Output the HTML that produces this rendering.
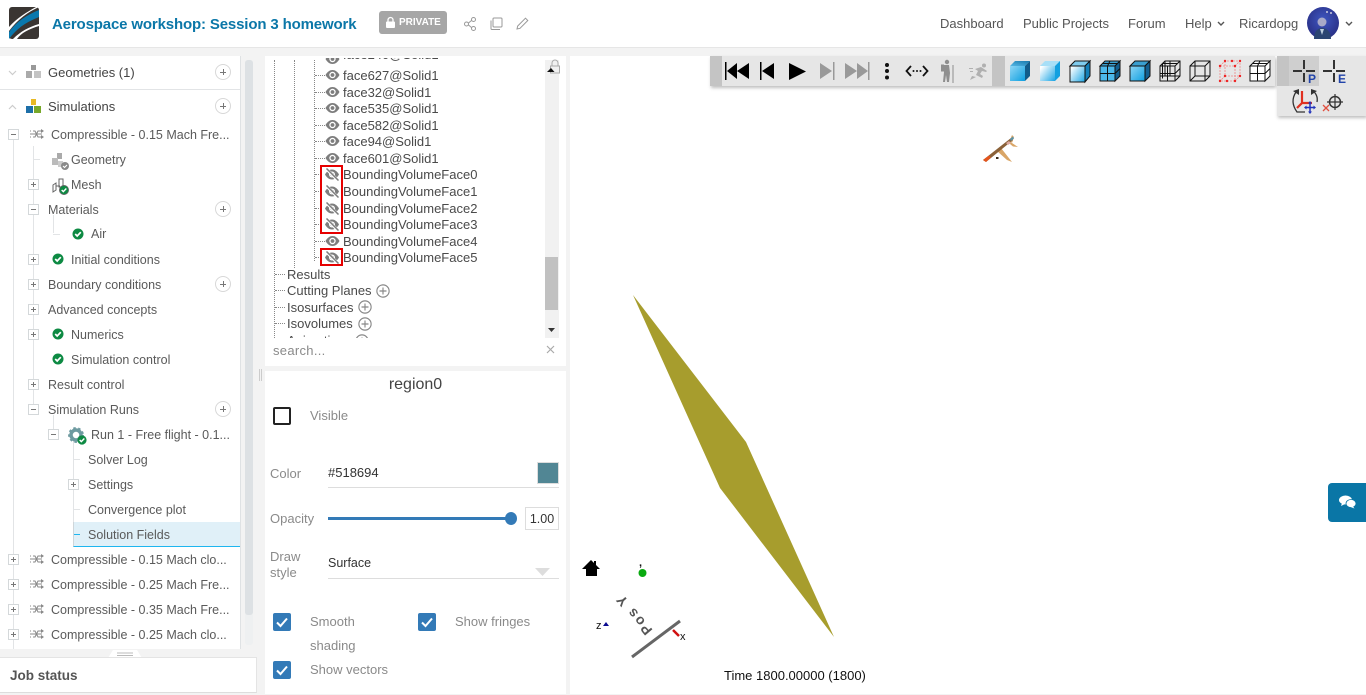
<!DOCTYPE html>
<html><head><meta charset="utf-8"><title>Aerospace workshop</title>
<style>
html,body{margin:0;padding:0}
body{width:1366px;height:695px;overflow:hidden;background:#f3f3f3;font-family:"Liberation Sans",sans-serif;position:relative}
div,span{position:absolute;box-sizing:border-box}
.t{white-space:nowrap;line-height:16px;height:16px;transform:translateY(1px)}
.l{font-size:12.5px;color:#5a5a5a}
.c{font-size:13px;color:#4a4a4a}
.n{font-size:13px;color:#555;top:15px}
.g{font-size:13px;color:#8a8a8a}
.b{background:#fff;border:1px solid #d4d8da;width:11px;height:11px}
.b:before{content:"";position:absolute;left:2px;top:4px;width:5px;height:1px;background:#777}
.p:after{content:"";position:absolute;left:4px;top:2px;width:1px;height:5px;background:#777}
.v{background:#e2e4e6;width:1px}
.h{background:#e2e4e6;height:1px}
.a{width:16px;height:16px;border:1px solid #d8d8d8;border-radius:50%;background:#fff;left:215px}
.a:before{content:"";position:absolute;left:4px;top:7px;width:6px;height:1px;background:#777}
.a:after{content:"";position:absolute;left:7px;top:4px;width:1px;height:6px;background:#777}
.d{border-top:1px dotted #888;height:1px}
.dv{border-left:1px dotted #888;width:1px}
.r{border:2px solid #e60000}
.cb{width:18px;height:18px;border-radius:2px;background:#337ab7}
svg{position:absolute;overflow:visible}
.m{height:16px;width:16px}
</style></head><body>
<svg width="0" height="0" style="left:0;top:0">
<defs>
<linearGradient id="gf" x1="0" y1="0" x2="1" y2="1"><stop offset="0" stop-color="#8fd6f5"/><stop offset="1" stop-color="#0d9fe0"/></linearGradient>
<linearGradient id="gw" x1="0" y1="0.2" x2="1" y2="1"><stop offset="0" stop-color="#fff"/><stop offset="1" stop-color="#1aa5e5"/></linearGradient>
<linearGradient id="gt" x1="0" y1="1" x2="1" y2="0"><stop offset="0" stop-color="#55b8e6"/><stop offset="1" stop-color="#1878ab"/></linearGradient>
<radialGradient id="av" cx=".5" cy=".4" r=".7"><stop offset="0" stop-color="#3f56c0"/><stop offset="1" stop-color="#25297c"/></radialGradient>
<symbol id="eye" viewBox="0 0 14 10"><path d="M0 5C2 1.500 4.500 0 7 0s5 1.500 7 5c-2 3.500-4.500 5-7 5S2 8.500 0 5z" fill="#7d7d7d"/><circle cx="7" cy="5" r="3.200" fill="#fff"/><circle cx="7" cy="5" r="1.900" fill="#7d7d7d"/></symbol>
<symbol id="noeye" viewBox="0 0 16 13"><path d="M1 6.500C3 3 5.500 1.500 8 1.500s5 1.500 7 5c-2 3.500-4.500 5-7 5s-5-1.500-7-5z" fill="#7d7d7d"/><circle cx="8" cy="6.500" r="3" fill="#fff"/><circle cx="8" cy="6.500" r="1.700" fill="#7d7d7d"/><path d="M2 .5l12 12" stroke="#fff" stroke-width="3"/><path d="M2.500 .5l12 12" stroke="#7d7d7d" stroke-width="1.500"/></symbol>
<symbol id="flow" viewBox="0 0 15 12"><path d="M0 3h1M3 3h2l3 6h4M0 9h1M3 9h2l3-6h4M0 6h12" fill="none" stroke="#888" stroke-width="1"/><path d="M11 1l3 2-3 2zM11 7l3 2-3 2z" fill="#888"/></symbol>
<symbol id="ok" viewBox="0 0 12 12"><circle cx="6" cy="6" r="5.500" fill="#0d8a43"/><path d="M3.200 6l2 2 3.600-3.800" fill="none" stroke="#fff" stroke-width="1.700"/></symbol>
<symbol id="oc" viewBox="0 0 16 16"><circle cx="8" cy="8" r="7" fill="none" stroke="#888" stroke-width="1.300"/><path d="M8 4v8M4 8h8" stroke="#888" stroke-width="1.300"/></symbol>
<symbol id="chk" viewBox="0 0 18 18"><path d="M4 9.500l3.500 3.500L14 5.500" fill="none" stroke="#fff" stroke-width="2"/></symbol>
<symbol id="cross" viewBox="0 0 22 22"><path d="M0 11h9M13 11h9M11 0v9M11 13v9" stroke="#333" stroke-width="2"/></symbol>
</defs></svg>

<!-- header -->
<div style="left:0;top:0;width:1366px;height:48px;background:#fff;border-bottom:1px solid #e6e6e6"></div>
<svg style="left:9px;top:7px" width="31" height="32" viewBox="0 0 31 32"><rect width="30" height="32" rx="3" fill="#3a3532"/><path d="M0 25C8 14 18 8 30 3V10C18 15 9 20 0 32z" fill="#0a78ad"/><path d="M0 20C8 11 18 5 27 0h3C19 5 9 12 0 24z" fill="#fff"/><path d="M4 32C12 24 20 20 30 17v2C20 22 12 26 8 32z" fill="#fff"/></svg>
<div class="t" style="left:52px;top:16px;font-size:15px;font-weight:bold;color:#0b77a8;letter-spacing:-.01em">Aerospace workshop: Session 3 homework</div>
<div style="left:379px;top:11px;width:68px;height:23px;background:#a6a6a6;border-radius:3px"></div>
<svg style="left:386px;top:17px" width="9" height="11" viewBox="0 0 9 11"><rect y="4.500" width="9" height="6.500" rx="1" fill="#fff"/><path d="M2 5V3a2.500 2.500 0 0 1 5 0v2" fill="none" stroke="#fff" stroke-width="1.300"/></svg>
<div class="t" style="left:399px;top:14px;font-size:10px;font-weight:bold;color:#fff">PRIVATE</div>
<svg style="left:464px;top:16px" width="50" height="16" viewBox="0 0 50 16" fill="none" stroke="#999"><circle cx="2.500" cy="8" r="2"/><circle cx="9.500" cy="3.500" r="2"/><circle cx="9.500" cy="12.500" r="2"/><path d="M4.500 7l3-2.500M4.500 9l3 2.500"/><rect x="29" y="2" width="9" height="9" rx="1"/><path d="M27 4.500v8a1 1 0 0 0 1 1h8"/></svg>
<svg style="left:516px;top:17px" width="13" height="13" viewBox="0 0 13 13" fill="none" stroke="#999"><path d="M1 12l.7-3L9.500 1.200l2.300 2.300L4 11.300z"/></svg>
<div class="t n" style="left:940px">Dashboard</div>
<div class="t n" style="left:1023px">Public Projects</div>
<div class="t n" style="left:1128px">Forum</div>
<div class="t n" style="left:1185px">Help</div>
<svg style="left:1217px;top:21px" width="8" height="6" viewBox="0 0 8 6"><path d="M1 1l3 3 3-3" fill="none" stroke="#555" stroke-width="1.400"/></svg>
<div class="t n" style="left:1239px">Ricardopg</div>
<svg style="left:1307px;top:7px" width="32" height="32" viewBox="0 0 32 32"><circle cx="16" cy="16" r="16" fill="url(#av)"/><circle cx="15" cy="15" r="4.500" fill="#a9a9c8"/><path d="M7 32c0-8 4-11 8-11s9 3 9 11z" fill="#2b4572"/><path d="M13 22l2 6 2-6z" fill="#bcd"/><circle cx="20" cy="5" r="1" fill="#ccd"/><circle cx="24" cy="6" r="1" fill="#ccd"/></svg>
<svg style="left:1345px;top:21px" width="8" height="6" viewBox="0 0 8 6"><path d="M1 1l3 3 3-3" fill="none" stroke="#555" stroke-width="1.400"/></svg>

<!-- left panel -->
<div style="left:0;top:56px;width:241px;height:593px;background:#fff;border-right:1px solid #dfe2e4"></div>
<div class="h" style="left:0;top:89px;width:240px"></div>
<div style="left:245px;top:60px;width:8px;height:585px;background:#eef0f1;border-radius:3px"></div>
<div style="left:245px;top:60px;width:8px;height:555px;background:#dde1e4;border-radius:3px"></div>
<svg style="left:8px;top:70px" width="9" height="6" viewBox="0 0 9 6"><path d="M1 1l3.500 3.500L8 1" fill="none" stroke="#ccc" stroke-width="1.200"/></svg>
<svg style="left:8px;top:104px" width="9" height="6" viewBox="0 0 9 6"><path d="M1 5l3.500-3.500L8 5" fill="none" stroke="#ccc" stroke-width="1.200"/></svg>
<svg style="left:26px;top:65px" width="15" height="14" viewBox="0 0 15 14"><path d="M5 0h5v5H5z" fill="#999"/><path d="M0 6h6v7H0z" fill="#aaa"/><path d="M8 6h7v7H8z" fill="#c4c4c4"/></svg>
<svg style="left:26px;top:99px" width="15" height="15" viewBox="0 0 15 15"><path d="M5 0h5v6H5z" fill="#e8b923"/><path d="M0 7h7v7H0z" fill="#1d6fa8"/><path d="M8 7h7v7H8z" fill="#78a82a"/></svg>
<div class="t" style="left:48px;top:64px;font-size:13px;font-weight:normal;color:#444">Geometries (1)</div>
<div class="t" style="left:48px;top:98px;font-size:13px;color:#444">Simulations</div>
<div class="a" style="top:64px"></div><div class="a" style="top:98px"></div>

<div class="v" style="left:13px;top:140px;height:509px"></div>
<div class="v" style="left:33px;top:146px;height:265px"></div>
<div class="h" style="left:33px;top:159px;width:7px"></div>
<div class="v" style="left:53px;top:215px;height:18px"></div>
<div class="h" style="left:53px;top:234px;width:7px"></div>
<div class="v" style="left:53px;top:415px;height:14px"></div>
<div class="v" style="left:73px;top:440px;height:106px"></div>
<div class="h" style="left:73px;top:459px;width:7px"></div>
<div class="h" style="left:73px;top:509px;width:7px"></div>
<div style="left:73px;top:522px;width:167px;height:25px;background:#e0f0f8;border-bottom:1px solid #1fb6ef;border-left:1px solid #cfd6da"></div>
<div style="left:74px;top:534px;width:6px;height:1px;background:#1fb6ef"></div>

<div class="b p" style="left:8px;top:554px"></div><div class="b p" style="left:8px;top:579px"></div><div class="b p" style="left:8px;top:604px"></div><div class="b p" style="left:8px;top:629px"></div>
<div class="b" style="left:8px;top:129px"></div>
<div class="b p" style="left:28px;top:179px"></div><div class="b" style="left:28px;top:204px"></div><div class="b p" style="left:28px;top:254px"></div><div class="b p" style="left:28px;top:279px"></div><div class="b p" style="left:28px;top:304px"></div><div class="b p" style="left:28px;top:329px"></div><div class="b p" style="left:28px;top:379px"></div><div class="b" style="left:28px;top:404px"></div>
<div class="b" style="left:48px;top:429px"></div><div class="b p" style="left:68px;top:479px"></div>

<svg style="left:30px;top:128px" width="15" height="12"><use href="#flow"/></svg>
<svg style="left:30px;top:553px" width="15" height="12"><use href="#flow"/></svg>
<svg style="left:30px;top:578px" width="15" height="12"><use href="#flow"/></svg>
<svg style="left:30px;top:603px" width="15" height="12"><use href="#flow"/></svg>
<svg style="left:30px;top:628px" width="15" height="12"><use href="#flow"/></svg>

<svg style="left:52px;top:153px" width="18" height="18" viewBox="0 0 18 18"><path d="M5 0h5v6H5z" fill="#aaa"/><path d="M0 5h6v7H0z" fill="#bbb"/><path d="M6 8h5v6H6z" fill="#ccc"/><circle cx="13" cy="13" r="4" fill="#8a8a8a"/><path d="M11 13l1.500 1.500 2.500-2.500" fill="none" stroke="#fff" stroke-width="1.100"/></svg>
<svg style="left:52px;top:178px" width="18" height="18" viewBox="0 0 18 18" fill="none" stroke="#666"><path d="M1 7l3-2v7l-3 2zM7 1l4 0v8H7zM4 8h4"/><use href="#ok" x="7" y="7" width="10" height="10"/></svg>
<svg style="left:72px;top:228px" width="12" height="12"><use href="#ok"/></svg>
<svg style="left:52px;top:253px" width="12" height="12"><use href="#ok"/></svg>
<svg style="left:52px;top:328px" width="12" height="12"><use href="#ok"/></svg>
<svg style="left:52px;top:353px" width="12" height="12"><use href="#ok"/></svg>
<svg style="left:68px;top:427px" width="22" height="20" viewBox="0 0 22 20"><circle cx="8" cy="8" r="5" fill="none" stroke="#6d9aa0" stroke-width="3.500"/><circle cx="8" cy="8" r="7" fill="none" stroke="#6d9aa0" stroke-width="1.800" stroke-dasharray="2.500 2.500"/><use href="#ok" x="9" y="8" width="10" height="10"/></svg>

<div class="t l" style="left:51px;top:126px">Compressible - 0.15 Mach Fre...</div>
<div class="t l" style="left:71px;top:151px">Geometry</div>
<div class="t l" style="left:71px;top:176px">Mesh</div>
<div class="t l" style="left:48px;top:201px">Materials</div>
<div class="t l" style="left:91px;top:225px">Air</div>
<div class="t l" style="left:71px;top:251px">Initial conditions</div>
<div class="t l" style="left:48px;top:276px">Boundary conditions</div>
<div class="t l" style="left:48px;top:301px">Advanced concepts</div>
<div class="t l" style="left:71px;top:326px">Numerics</div>
<div class="t l" style="left:71px;top:351px">Simulation control</div>
<div class="t l" style="left:48px;top:376px">Result control</div>
<div class="t l" style="left:48px;top:401px">Simulation Runs</div>
<div class="t l" style="left:91px;top:426px">Run 1 - Free flight - 0.1...</div>
<div class="t l" style="left:88px;top:451px">Solver Log</div>
<div class="t l" style="left:88px;top:476px">Settings</div>
<div class="t l" style="left:88px;top:501px">Convergence plot</div>
<div class="t l" style="left:88px;top:526px">Solution Fields</div>
<div class="t l" style="left:51px;top:551px">Compressible - 0.15 Mach clo...</div>
<div class="t l" style="left:51px;top:576px">Compressible - 0.25 Mach Fre...</div>
<div class="t l" style="left:51px;top:601px">Compressible - 0.35 Mach Fre...</div>
<div class="t l" style="left:51px;top:626px">Compressible - 0.25 Mach clo...</div>
<div class="a" style="top:201px"></div><div class="a" style="top:276px"></div><div class="a" style="top:401px"></div>

<svg style="left:108px;top:650px" width="34" height="8" viewBox="0 0 34 8"><path d="M0 8L5 0h24l5 8z" fill="#fff"/><path d="M9 3h16M9 5.500h16" stroke="#bbb"/></svg>
<div style="left:0;top:657px;width:257px;height:36px;background:#fff;border-top:1px solid #e4e4e4;border-bottom:1px solid #ddd;border-right:1px solid #e4e4e4"></div>
<div class="t" style="left:10px;top:667px;font-size:13.500px;font-weight:bold;color:#555">Job status</div>
<div style="left:259px;top:369px;width:1px;height:12px;background:#ccc"></div>
<div style="left:261px;top:369px;width:1px;height:12px;background:#ccc"></div>

<!-- center tree -->
<div style="left:265px;top:56px;width:301px;height:310px;background:#fff;overflow:hidden" id="tree">
<div class="dv" style="left:9px;top:4px;height:280px"></div>
<div class="dv" style="left:29px;top:4px;height:208px"></div>
<div class="dv" style="left:49px;top:4px;height:201px"></div>
<div class="d" style="left:50px;top:19px;width:10px"></div><div class="d" style="left:50px;top:36px;width:10px"></div><div class="d" style="left:50px;top:52px;width:10px"></div><div class="d" style="left:50px;top:69px;width:10px"></div><div class="d" style="left:50px;top:85px;width:10px"></div><div class="d" style="left:50px;top:102px;width:10px"></div><div class="d" style="left:50px;top:118px;width:6px"></div><div class="d" style="left:50px;top:135px;width:6px"></div><div class="d" style="left:50px;top:152px;width:6px"></div><div class="d" style="left:50px;top:168px;width:6px"></div><div class="d" style="left:50px;top:185px;width:10px"></div><div class="d" style="left:50px;top:201px;width:6px"></div>
<div class="d" style="left:10px;top:218px;width:10px"></div><div class="d" style="left:10px;top:234px;width:10px"></div><div class="d" style="left:10px;top:251px;width:10px"></div><div class="d" style="left:10px;top:267px;width:10px"></div>
<svg style="left:60px;top:-2px" width="15" height="10"><use href="#eye"/></svg>
<svg style="left:60px;top:14px" width="15" height="10"><use href="#eye"/></svg>
<svg style="left:60px;top:31px" width="15" height="10"><use href="#eye"/></svg>
<svg style="left:60px;top:47px" width="15" height="10"><use href="#eye"/></svg>
<svg style="left:60px;top:64px" width="15" height="10"><use href="#eye"/></svg>
<svg style="left:60px;top:80px" width="15" height="10"><use href="#eye"/></svg>
<svg style="left:60px;top:97px" width="15" height="10"><use href="#eye"/></svg>
<svg style="left:60px;top:180px" width="15" height="10"><use href="#eye"/></svg>
<svg style="left:59px;top:112px" width="16" height="13"><use href="#noeye"/></svg>
<svg style="left:59px;top:129px" width="16" height="13"><use href="#noeye"/></svg>
<svg style="left:59px;top:146px" width="16" height="13"><use href="#noeye"/></svg>
<svg style="left:59px;top:162px" width="16" height="13"><use href="#noeye"/></svg>
<svg style="left:59px;top:195px" width="16" height="13"><use href="#noeye"/></svg>
<div class="t c" style="left:78px;top:-10px">face240@Solid1</div>
<div class="t c" style="left:78px;top:11px">face627@Solid1</div>
<div class="t c" style="left:78px;top:28px">face32@Solid1</div>
<div class="t c" style="left:78px;top:44px">face535@Solid1</div>
<div class="t c" style="left:78px;top:61px">face582@Solid1</div>
<div class="t c" style="left:78px;top:77px">face94@Solid1</div>
<div class="t c" style="left:78px;top:94px">face601@Solid1</div>
<div class="t c" style="left:78px;top:110px">BoundingVolumeFace0</div>
<div class="t c" style="left:78px;top:127px">BoundingVolumeFace1</div>
<div class="t c" style="left:78px;top:144px">BoundingVolumeFace2</div>
<div class="t c" style="left:78px;top:160px">BoundingVolumeFace3</div>
<div class="t c" style="left:78px;top:177px">BoundingVolumeFace4</div>
<div class="t c" style="left:78px;top:193px">BoundingVolumeFace5</div>
<div class="t c" style="left:22px;top:210px">Results</div>
<div class="t c" style="left:22px;top:226px">Cutting Planes</div>
<div class="t c" style="left:22px;top:243px">Isosurfaces</div>
<div class="t c" style="left:22px;top:259px">Isovolumes</div>
<div class="t c" style="left:22px;top:276px">Animations</div>
<svg style="left:111px;top:228px" width="14" height="14"><use href="#oc"/></svg>
<svg style="left:93px;top:244px" width="14" height="14"><use href="#oc"/></svg>
<svg style="left:93px;top:261px" width="14" height="14"><use href="#oc"/></svg>
<svg style="left:90px;top:278px" width="14" height="14"><use href="#oc"/></svg>
<div class="r" style="left:55px;top:109px;width:23px;height:69px"></div>
<div class="r" style="left:55px;top:192px;width:23px;height:18px"></div>
<div style="left:0;top:0;width:301px;height:2px;background:#fff"></div>
<div style="left:280px;top:4px;width:14px;height:278px;background:#f1f1f1"></div>
<div style="left:280px;top:201px;width:13px;height:53px;background:#c1c1c1"></div>
<svg style="left:281px;top:3px" width="14" height="16" viewBox="0 0 14 16"><path d="M6 7V4a3 3 0 0 1 6 0v3" fill="none" stroke="#aaa"/><rect x="4.500" y="7" width="9" height="7" fill="#f1f1f1" stroke="#aaa"/><path d="M1 13l4-4 3.500 4z" fill="#111"/></svg>
<svg style="left:282px;top:271px" width="9" height="6"><path d="M1 1h7L4.500 5z" fill="#333"/></svg>
<div style="left:0;top:282px;width:301px;height:28px;background:#fff"></div>
<div class="t g" style="left:8px;top:286px;letter-spacing:.3px">search...</div>
<svg style="left:281px;top:289px" width="9" height="9"><path d="M1 1l7 7M8 1l-7 7" stroke="#aaa" stroke-width="1.200"/></svg>
</div>

<!-- properties -->
<div style="left:265px;top:371px;width:301px;height:323px;background:#fff"></div>
<div class="t" style="left:265px;top:376px;width:301px;text-align:center;font-size:16px;color:#444">region0</div>
<div style="left:273px;top:407px;width:18px;height:18px;border:2px solid #222;border-radius:2px"></div>
<div class="t g" style="left:310px;top:407px">Visible</div>
<div class="t g" style="left:270px;top:465px">Color</div>
<div class="t" style="left:328px;top:464px;font-size:13px;color:#333">#518694</div>
<div class="h" style="left:328px;top:487px;width:231px;background:#ddd"></div>
<div style="left:537px;top:462px;width:22px;height:22px;background:#518694;border:1px solid #ddd"></div>
<div class="t g" style="left:270px;top:510px">Opacity</div>
<div style="left:328px;top:517px;width:183px;height:3px;background:#337ab7"></div>
<div style="left:505px;top:512px;width:12px;height:13px;border-radius:50%;background:#337ab7"></div>
<div style="left:525px;top:507px;width:34px;height:23px;border:1px solid #ddd"></div>
<div class="t" style="left:525px;top:510px;width:34px;text-align:center;font-size:12.500px;color:#333">1.00</div>
<div class="t g" style="left:270px;top:548px">Draw</div>
<div class="t g" style="left:270px;top:564px">style</div>
<div class="t" style="left:328px;top:554px;font-size:12.500px;color:#333">Surface</div>
<div class="h" style="left:328px;top:578px;width:231px;background:#ddd"></div>
<svg style="left:535px;top:568px" width="15" height="8"><path d="M0 0h15L7.500 8z" fill="#ddd"/></svg>
<div class="cb" style="left:273px;top:613px"></div><svg style="left:273px;top:613px" width="18" height="18"><use href="#chk"/></svg>
<div class="cb" style="left:418px;top:613px"></div><svg style="left:418px;top:613px" width="18" height="18"><use href="#chk"/></svg>
<div class="cb" style="left:273px;top:661px"></div><svg style="left:273px;top:661px" width="18" height="18"><use href="#chk"/></svg>
<div class="t g" style="left:310px;top:613px">Smooth</div>
<div class="t g" style="left:310px;top:637px">shading</div>
<div class="t g" style="left:455px;top:613px">Show fringes</div>
<div class="t g" style="left:310px;top:661px">Show vectors</div>

<!-- viewer -->
<div style="left:570px;top:56px;width:796px;height:638px;background:#fff"></div>
<svg style="left:0;top:0" width="1366" height="695" viewBox="0 0 1366 695">
<path d="M633 295L746 442L834 637L720 488z" fill="#a79d2d"/>
<!-- plane -->
<path d="M997 151l4-3 11 14-5-2z" fill="#d9a566"/>
<path d="M1009 141l9 6-5-.5-3-2.500z" fill="#d9a566"/>
<path d="M1012 135l2 2-2 6-2-3z" fill="#d9a566"/>
<path d="M983 160l28-22 2 2-27 22z" fill="#8b6239"/>
<path d="M983 160l6-4.500 2 2-5 4.500z" fill="#e5541c"/>
<path d="M1006 143l3-2 2 2-3 2z" fill="#dca9a0"/>
<path d="M1010 139l3-2.500 1 2-3 2.500z" fill="#5b93a8"/>
<rect x="996" y="157" width="2.500" height="2" fill="#3a2a18"/>
<!-- toolbars -->
<defs><filter id="sh" x="-5%" y="-20%" width="110%" height="150%"><feDropShadow dx="1" dy="2" stdDeviation="1.500" flood-color="#000" flood-opacity=".25"/></filter></defs>
<rect x="710" y="56" width="565" height="30" fill="#e6e6e6" filter="url(#sh)"/>
<path d="M1277 56H1366V116H1277z" fill="#e6e6e6" filter="url(#sh)"/>
<rect x="710" y="56" width="12" height="30" fill="#c4c4c4"/>
<rect x="992" y="56" width="13" height="30" fill="#c4c4c4"/>
<rect x="1277" y="56" width="12" height="60" fill="#e6e6e6"/>
<rect x="1277" y="56" width="12" height="30" fill="#c4c4c4"/>
<rect x="1289" y="56" width="30" height="30" fill="#cfcfcf"/>
<g fill="#000"><rect x="725" y="62" width="1.500" height="18"/><path d="M727 71l10-8v16zM737 71l12-8v16z"/><rect x="760" y="62" width="1.500" height="18"/><path d="M762 71l12-8v16zM789 63l17 8.500-17 8.500z"/></g>
<g fill="#999"><path d="M820 63l12 8-12 8zM845 63l12 8-12 8zM857 63l11 8-11 8z"/><rect x="833" y="62" width="1.500" height="18"/><rect x="868" y="62" width="1.500" height="18"/></g>
<g fill="#111"><circle cx="887" cy="65" r="2"/><circle cx="887" cy="71" r="2"/><circle cx="887" cy="77.500" r="2"/><circle cx="913.500" cy="71" r="1"/><circle cx="917" cy="71" r="1"/><circle cx="920.500" cy="71" r="1"/></g>
<path d="M911 66l-4.500 5 4.500 5M923 66l4.500 5-4.500 5" fill="none" stroke="#111" stroke-width="1.800"/>
<g fill="#8f8f8f"><circle cx="947" cy="62" r="2.200"/><path d="M943 65h6l1 8-1 9h-2l-1-7-1 7h-2l1-10z"/><rect x="941" y="64.500" width="3" height="7"/><rect x="952.500" y="65" width="1" height="18"/></g>
<g fill="#b0b0b0"><circle cx="984" cy="65.500" r="2"/><path d="M975 69l6-2 3 2 3 2-1 1-4-1-2 3 3 2-1 2-6-3 2-4zM972 76l4 1-6 3zM969 68h4v1h-4zM970 71h3v1h-3z"/></g>

<g id="cubes">
<g transform="translate(1010 61)"><path d="M0 5h15v15H0z" fill="url(#gf)"/><path d="M0 5L5 0h15l-5 5z" fill="url(#gt)"/><path d="M15 5l5-5v15l-5 5z" fill="#125c8a"/></g>
<g transform="translate(1040 61)"><path d="M0 5h15v15H0z" fill="url(#gw)"/><path d="M0 5L5 0h15l-5 5z" fill="#a8dff7"/><path d="M15 5l5-5v15l-5 5z" fill="#12a0e0"/></g>
<g transform="translate(1070 61)" stroke="#111" stroke-width="1"><path d="M0 5h15v16H0z" fill="url(#gw)"/><path d="M0 5L5 0h15l-5 5z" fill="#7fcbed"/><path d="M15 5l5-5v15l-5 6z" fill="#137fb8"/></g>
<g transform="translate(1100 61)" stroke="#111" stroke-width="1"><path d="M0 5h15v15H0z" fill="#4cb8ea"/><path d="M0 5L5 0h15l-5 5z" fill="#3a9fd0"/><path d="M15 5l5-5v15l-5 5z" fill="#135f8f"/><path d="M7.500 5v15M0 12.500h15M15 12.500l5-5M2.500 2.500h15M10 0l-2.500 5" fill="none"/></g>
<g transform="translate(1130 61)" stroke="#111" stroke-width="1"><path d="M0 5h15v15H0z" fill="url(#gf)"/><path d="M0 5L5 0h15l-5 5z" fill="#3a9fd0"/><path d="M15 5l5-5v15l-5 5z" fill="#135f8f"/></g>
<g transform="translate(1160 61)" stroke="#111" stroke-width="1" fill="none"><path d="M0 5h15v15H0zM0 5L5 0h15v15l-5 5M15 5l5-5M5 0v15H0M5 15h15M2.500 2.500v15M7.500 5v15M0 12.500h15M15 12.500l5-5M10 0v15M2.500 2.500h15"/></g>
<g transform="translate(1190 61)" stroke="#111" stroke-width="1" fill="none"><path d="M0 5h15v15H0zM0 5L5 0h15v15l-5 5M15 5l5-5M5 0v15M5 15l-5 5M5 15h15"/></g>
<g transform="translate(1220 61)" stroke="#e88" stroke-width=".8" fill="none" stroke-dasharray="2 1"><path d="M0 5h15v15H0zM0 5L5 0h15v15l-5 5M15 5l5-5M5 0v15M5 15l-5 5M5 15h15"/></g>
<g transform="translate(1220 61)" fill="#e22"><circle cx="0" cy="5" r="1.200"/><circle cx="5" cy="0" r="1.200"/><circle cx="12" cy="0" r="1.200"/><circle cx="20" cy="0" r="1.200"/><circle cx="15" cy="5" r="1.200"/><circle cx="20" cy="15" r="1.200"/><circle cx="15" cy="20" r="1.200"/><circle cx="0" cy="20" r="1.200"/><circle cx="7" cy="20" r="1.200"/><circle cx="5" cy="15" r="1.200"/></g>
<g transform="translate(1250 61)" stroke="#111" stroke-width="1" fill="#fff"><path d="M0 5h15v15H0zM0 5L5 0h15l-5 5zM15 5l5-5v15l-5 5z"/><path d="M7.500 5v15M0 12.500h15M15 12.500l5-5M2.500 2.500h15M10 0l-2.500 5" fill="none"/></g>
</g>
<use href="#cross" x="1293" y="60" width="22" height="22"/>
<use href="#cross" x="1323" y="60" width="22" height="22"/>
<text x="1308" y="83" font-family="Liberation Sans" font-size="12" font-weight="bold" fill="#2244aa">P</text>
<text x="1338" y="83" font-family="Liberation Sans" font-size="12" font-weight="bold" fill="#2244aa">E</text>
<path d="M1296 92c-4 6-4 13 1 20h8M1312 90c4 3 6 7 5 12" fill="none" stroke="#333" stroke-width="1.300"/>
<path d="M1293 91l6-2v6zM1317 91l-6-2v6z" fill="#333"/>
<path d="M1302 91v12h10M1302 103l-5 5" fill="none" stroke="#e03020" stroke-width="2.200"/>
<path d="M1310 103v9M1305.500 107.500h9" stroke="#2233bb" stroke-width="1.500" fill="none"/>
<path d="M1310 101l-2 2.500h4zM1310 114l-2-2.500h4zM1304 107.500l2.500-2v4zM1316 107.500l-2.500-2v4z" fill="#2233bb"/>
<circle cx="1335" cy="102" r="5.500" fill="none" stroke="#333" stroke-width="1.500"/>
<path d="M1335 94v16M1327 102h16" stroke="#333" stroke-width="1.200"/>
<path d="M1323 105l6 6M1329 105l-6 6" stroke="#e05040" stroke-width="1.300"/>
<!-- axes -->
<path d="M591 560l9 9h-3v7h-11v-7h-4z" fill="#000"/>
<rect x="594" y="561" width="2" height="5"/>
<circle cx="642.500" cy="573" r="4" fill="#0aaa10"/>
<text x="639" y="566" font-family="Liberation Sans" font-size="11" font-weight="bold" fill="#111">,</text>
<text font-family="Liberation Sans" font-size="14" font-weight="bold" letter-spacing="2" fill="#555" transform="translate(653 630) rotate(-130)">Pos Y</text>
<path d="M632 657L680 621" stroke="#666" stroke-width="3"/>
<path d="M673 630l6 6" stroke="#d01010" stroke-width="2.500"/>
<text x="596" y="629" font-family="Liberation Sans" font-size="11" fill="#111">z</text>
<path d="M606 622l3 4h-6z" fill="#0a0a90"/>
<text x="680" y="640" font-family="Liberation Sans" font-size="11" fill="#111">x</text>
</svg>
<div class="t" style="left:724px;top:667px;font-size:13px;color:#111">Time 1800.00000 (1800)</div>
<div style="left:1328px;top:483px;width:38px;height:39px;background:#0a76a6;border-radius:4px 0 0 4px"></div>
<svg style="left:1339px;top:495px" width="17" height="14" viewBox="0 0 17 14" fill="#fff"><ellipse cx="6.500" cy="5" rx="6.500" ry="4.500"/><path d="M3 8l-1 3 4-2z"/><ellipse cx="12" cy="8.500" rx="5" ry="4" stroke="#0a76a6" stroke-width=".8"/><path d="M14 11.500l1.500 2-4-1.500z"/></svg>
</body></html>
